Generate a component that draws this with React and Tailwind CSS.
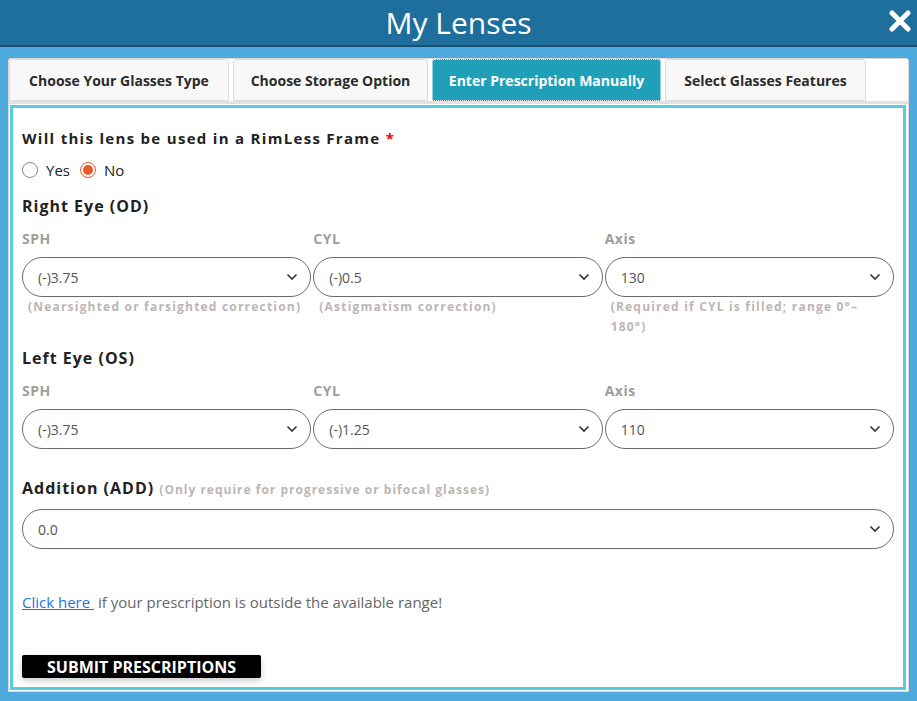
import React, { useState } from 'react'

const Chevron = () => (
    <svg width="12" height="8" viewBox="0 0 12 8" fill="none" stroke="#333" strokeWidth="1.6">
        <path d="M1.5 1.5 L6 6 L10.5 1.5" />
    </svg>
)

const SelectBox = ({ value }) => (
    <div className="h-[40px] w-full rounded-full border border-[#6b6b6b] flex items-center justify-between pl-[15px] pr-[12px] text-[14px] text-[#555] bg-white">
        <span>{value}</span>
        <Chevron />
    </div>
)

const tabs = [
    { label: 'Choose Your Glasses Type', w: 'w-[220px]' },
    { label: 'Choose Storage Option', w: 'w-[195px]' },
    { label: 'Enter Prescription Manually', w: 'w-[229px]' },
    { label: 'Select Glasses Features', w: 'w-[201px]' },
]

const helperPad = ['pr-0', 'pr-0', 'pr-[34px]']

const EyeFields = ({ title, values, helpers }) => (
    <div>
        <h3 className="text-[16px] leading-[20px] font-bold text-[#222] tracking-[1px] mb-[14px]">{title}</h3>
        <div className="grid grid-cols-3 gap-[2px]">
            {['SPH', 'CYL', 'Axis'].map((label, i) => (
                <div key={label}>
                    <div className="text-[14px] leading-[18px] font-bold text-[#9e9e9e] tracking-[0.5px] mb-[9px]">{label}</div>
                    <SelectBox value={values[i]} />
                    {helpers && (
                        <p className={`text-[12px] font-bold text-[#bdb5b5] tracking-[1.2px] leading-[20px] pl-[6px] ${helperPad[i]}`}>{helpers[i]}</p>
                    )}
                </div>
            ))}
        </div>
    </div>
)

const Radio = ({ checked, onClick, children }) => (
    <label className="flex items-center gap-[8px]" onClick={onClick}>
        <span className={`w-[16px] h-[16px] rounded-full border flex items-center justify-center ${checked ? 'border-[#e85a2a]' : 'border-[#888]'}`}>
            {checked && <span className="w-[10px] h-[10px] rounded-full bg-[#e85a2a]" />}
        </span>
        {children}
    </label>
)

export default function App() {
    const [rimless, setRimless] = useState('no')

    return (
        <div className="w-[917px] h-[701px] bg-[#4eaadc] flex flex-col overflow-hidden" style={{ fontFamily: '"Open Sans", "Liberation Sans", sans-serif' }}>
            <header className="h-[47px] bg-[#1e6f9c] border-b-2 border-[#1b4e6c] flex items-center justify-center relative shrink-0">
                <h1 className="text-white text-[30px] font-normal leading-none">My Lenses</h1>
                <button className="absolute right-[6px] top-[9px] text-white">
                    <svg width="22" height="24" viewBox="0 0 22 24"><path d="M3 4 L19 20 M19 4 L3 20" stroke="white" strokeWidth="5" strokeLinecap="round" /></svg>
                </button>
            </header>

            <div className="mx-[8px] mt-[11px] mb-[9px] flex-1 min-h-0 bg-white border border-[#d8d8d8] rounded-t-[3px] flex flex-col">
                <div className="flex gap-[4px] border-b-[3px] border-[#e2e2e2]">
                    {tabs.map((tab, i) => (
                        <div
                            key={tab.label}
                            className={`${tab.w} h-[42px] flex items-center justify-center text-[14px] font-bold rounded-t-[3px] ${i === 2 ? 'bg-[#1fa0b8] text-white border border-dotted border-white' : 'bg-[#f8f8f8] text-[#2b2b2b] border border-[#dcdcdc]'}`}
                        >
                            {tab.label}
                        </div>
                    ))}
                </div>

                <div className="flex-1 min-h-0 overflow-hidden ml-[1px] mr-[2px] mt-[1px] mb-[1px] border-[3px] border-[#59cbde] px-[9px] pt-[20px]">
                    <h2 className="text-[15px] leading-[20px] font-bold text-[#222] tracking-[1.3px]">
                        Will this lens be used in a RimLess Frame <span className="text-red-600">*</span>
                    </h2>
                    <div className="flex items-center gap-[10px] mt-[12px] h-[20px] text-[15px] text-[#222]">
                        <Radio checked={rimless === 'yes'} onClick={() => setRimless('yes')}>Yes</Radio>
                        <Radio checked={rimless === 'no'} onClick={() => setRimless('no')}>No</Radio>
                    </div>

                    <div className="mt-[16px]">
                        <EyeFields
                            title="Right Eye (OD)"
                            values={['(-)3.75', '(-)0.5', '130']}
                            helpers={['(Nearsighted or farsighted correction)', '(Astigmatism correction)', '(Required if CYL is filled; range 0°–180°)']}
                        />
                    </div>

                    <div className="mt-[11px]">
                        <EyeFields title="Left Eye (OS)" values={['(-)3.75', '(-)1.25', '110']} />
                    </div>

                    <div className="mt-[29px]">
                        <h3 className="text-[16px] leading-[20px] font-bold text-[#222] tracking-[1px] mb-[9px]">
                            Addition (ADD) <span className="text-[12px] text-[#bdb5b5] tracking-[1px]">(Only require for progressive or bifocal glasses)</span>
                        </h3>
                        <SelectBox value="0.0" />
                    </div>

                    <p className="mt-[43px] text-[15px] leading-[20px] text-[#666]">
                        <a href="#" className="text-[#1a73e8] underline">Click here&nbsp;</a>&nbsp;if your prescription is outside the available range!
                    </p>

                    <button className="mt-[43px] w-[239px] h-[23px] bg-black text-white text-[16px] font-bold rounded-[2px] shadow-[0_3px_6px_rgba(0,0,0,0.2)] leading-none">
                        SUBMIT PRESCRIPTIONS
                    </button>
                </div>
            </div>
        </div>
    )
}
